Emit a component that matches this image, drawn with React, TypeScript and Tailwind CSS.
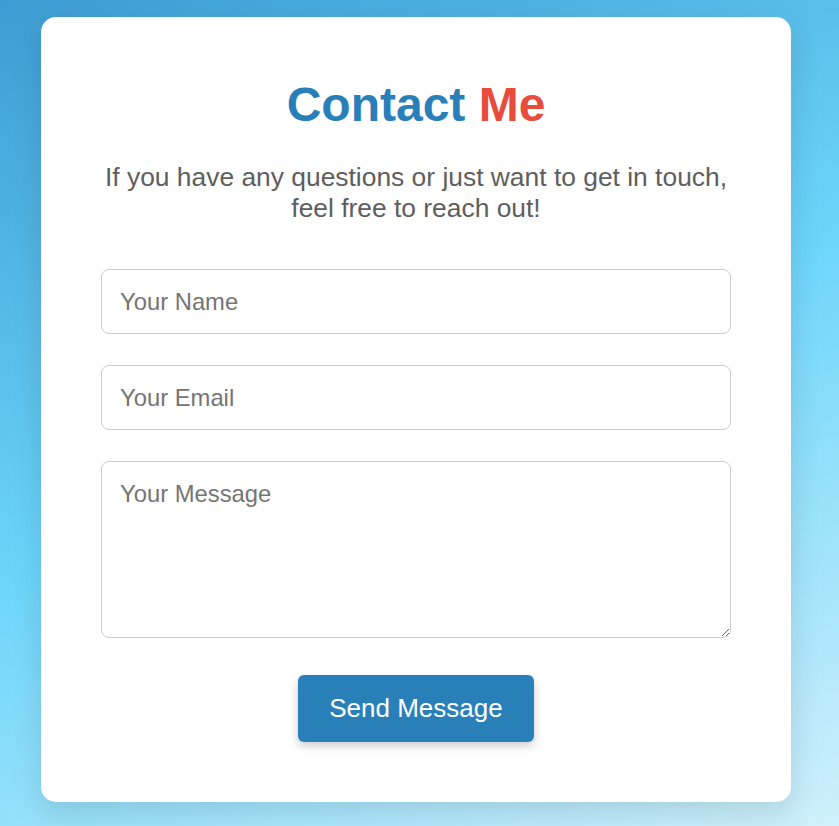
import React, { useState } from 'react'

const FONT = { fontFamily: '"Liberation Sans", Arial, sans-serif' }

export default function App() {
  const [name, setName] = useState('')
  const [email, setEmail] = useState('')
  const [message, setMessage] = useState('')

  const field =
    'block w-full rounded-[8px] border border-[#cccccc] bg-white px-[18px] py-[18px] text-[23.8px] leading-[27px] text-[#333] placeholder:text-[#757575] outline-none'

  return (
    <div
      className="min-h-[826px] w-full overflow-hidden bg-[linear-gradient(157deg,#3d9cd3_0%,#6dd5fa_50%,#d0f0fc_100%)] pt-[17px] pb-[24px]"
      style={FONT}
    >
      <div className="ml-[41px] w-[750px] rounded-[15px] bg-white px-[60px] pt-[61px] pb-[60px] shadow-[0_10px_30px_rgba(0,0,0,0.12)]">
        <h1 className="text-center text-[48px] font-bold leading-[54px] text-[#2980b9]">
          Contact <span className="text-[#e74c3c]">Me</span>
        </h1>
        <p className="mt-[30px] text-center text-[26.4px] leading-[30.7px] text-[#5e5e5e]">
          If you have any questions or just want to get in touch,
          <br />
          feel free to reach out!
        </p>

        <form
          className="mt-[46px] flex flex-col gap-[31px]"
          onSubmit={(e) => e.preventDefault()}
        >
          <input
            type="text"
            placeholder="Your Name"
            value={name}
            onChange={(e) => setName(e.target.value)}
            className={`${field} h-[65px]`}
            style={FONT}
          />
          <input
            type="email"
            placeholder="Your Email"
            value={email}
            onChange={(e) => setEmail(e.target.value)}
            className={`${field} h-[65px]`}
            style={FONT}
          />
          <textarea
            placeholder="Your Message"
            value={message}
            onChange={(e) => setMessage(e.target.value)}
            className={`${field} h-[177px] resize-y`}
            style={FONT}
          />
          <div className="mt-[6px] flex justify-center">
            <button
              type="submit"
              className="h-[67px] w-[236px] rounded-[6px] bg-[#2980b9] text-[26px] text-white shadow-[0_4px_10px_rgba(0,0,0,0.2)]"
              style={FONT}
            >
              Send Message
            </button>
          </div>
        </form>
      </div>
    </div>
  )
}
